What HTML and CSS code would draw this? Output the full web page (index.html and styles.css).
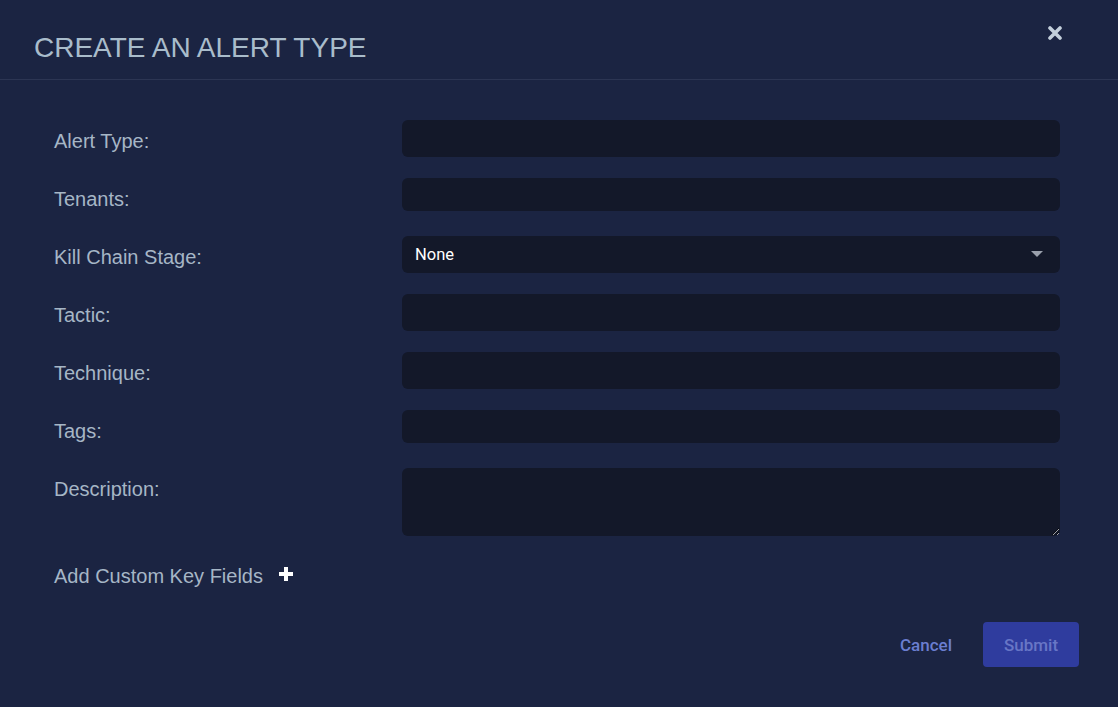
FILE: index.html
```html
<!DOCTYPE html>
<html lang="en">
<head>
  <meta charset="UTF-8" />
  <meta name="viewport" content="width=device-width, initial-scale=1.0"/>
  <title>Create an Alert Type</title>
  <link rel="stylesheet" href="styles.css">
</head>
<body>
  <div class="modal">
    <!-- Header -->
    <div class="modal-header">
      <h1>CREATE AN ALERT TYPE</h1>
      <button class="close-btn" aria-label="Close">
        <svg width="14" height="14" viewBox="0 0 14 14">
          <path d="M2 2 L12 12 M12 2 L2 12" stroke="#c3cfdb" stroke-width="3.6" stroke-linecap="round"/>
        </svg>
      </button>
    </div>

    <!-- Form -->
    <div class="modal-body">
      <div class="row">
        <label>Alert Type:</label>
        <input type="text" class="field tall" />
      </div>
      <div class="row">
        <label>Tenants:</label>
        <input type="text" class="field short" />
      </div>
      <div class="row">
        <label>Kill Chain Stage:</label>
        <div class="field tall select">
          <span>None</span>
          <svg width="12" height="7" viewBox="0 0 12 7"><path d="M0 0 L12 0 L6 6 Z" fill="#9aa0ac"/></svg>
        </div>
      </div>
      <div class="row">
        <label>Tactic:</label>
        <input type="text" class="field tall" />
      </div>
      <div class="row">
        <label>Technique:</label>
        <input type="text" class="field tall" />
      </div>
      <div class="row">
        <label>Tags:</label>
        <input type="text" class="field short" />
      </div>
      <div class="row">
        <label>Description:</label>
        <textarea class="field area"></textarea>
      </div>

      <div class="custom-keys">
        <span>Add Custom Key Fields</span>
        <svg width="16" height="16" viewBox="0 0 16 16">
          <path d="M8 1 V15 M1 8 H15" stroke="#ffffff" stroke-width="4"/>
        </svg>
      </div>
    </div>

    <!-- Footer -->
    <div class="modal-footer">
      <button class="btn-cancel">Cancel</button>
      <button class="btn-submit" disabled>Submit</button>
    </div>
  </div>
</body>
</html>
```

FILE: styles.css
```css
body {
  margin: 0;
  font-family: "Liberation Sans", Arial, sans-serif;
  background-color: #1b2442;
  color: #a6b6c6;
}

.modal {
  width: 1118px;
  height: 707px;
  background-color: #1b2442;
}

.modal-header {
  display: flex;
  justify-content: space-between;
  align-items: flex-start;
  height: 80px;
  border-bottom: 1px solid #2c3553;
  box-sizing: border-box;
  padding: 0 56px 0 34px;
}

.modal-header h1 {
  margin: 0;
  padding-top: 32px;
  font-size: 28px;
  font-weight: normal;
  line-height: 32px;
  color: #a9bccb;
}

.close-btn {
  margin-top: 26px;
  padding: 0;
  border: none;
  background: none;
  cursor: pointer;
}

.modal-body {
  padding: 40px 58px 0 54px;
}

.row {
  display: flex;
  align-items: flex-start;
  margin-bottom: 21px;
}

.row label {
  width: 348px;
  flex-shrink: 0;
  padding-top: 10px;
  font-size: 20px;
  line-height: 22px;
  color: #a6b6c6;
}

.field {
  display: block;
  box-sizing: border-box;
  width: 658px;
  margin: 0;
  border: none;
  border-radius: 6px;
  background-color: #131829;
  color: #ffffff;
  font-family: Roboto, sans-serif;
  font-size: 16px;
  outline: none;
}

.field.tall {
  height: 37px;
}

.field.short {
  height: 33px;
  margin-bottom: 4px;
}

.field.area {
  height: 68px;
  resize: vertical;
}

.select {
  display: flex;
  align-items: center;
  justify-content: space-between;
  padding: 0 17px 0 13px;
}

.select span {
  font-size: 16.5px;
}

/* row margin collapses into this one */
.custom-keys {
  display: flex;
  align-items: center;
  gap: 15px;
  margin-top: 29px;
  font-size: 20px;
  line-height: 23px;
  color: #a6b6c6;
}

.custom-keys svg {
  margin-top: -5px;
}

.modal-footer {
  display: flex;
  justify-content: flex-end;
  align-items: center;
  gap: 31px;
  padding: 34px 39px 0 0;
}

.btn-cancel {
  border: none;
  background: none;
  padding: 0;
  font-family: Roboto, sans-serif;
  font-size: 17px;
  font-weight: 500;
  color: #6b7ed0;
  cursor: pointer;
}

.btn-submit {
  width: 96px;
  height: 45px;
  border: none;
  border-radius: 4px;
  background-color: #2f3c9e;
  color: #6876c6;
  font-family: Roboto, sans-serif;
  font-size: 17px;
  font-weight: 500;
}
```
